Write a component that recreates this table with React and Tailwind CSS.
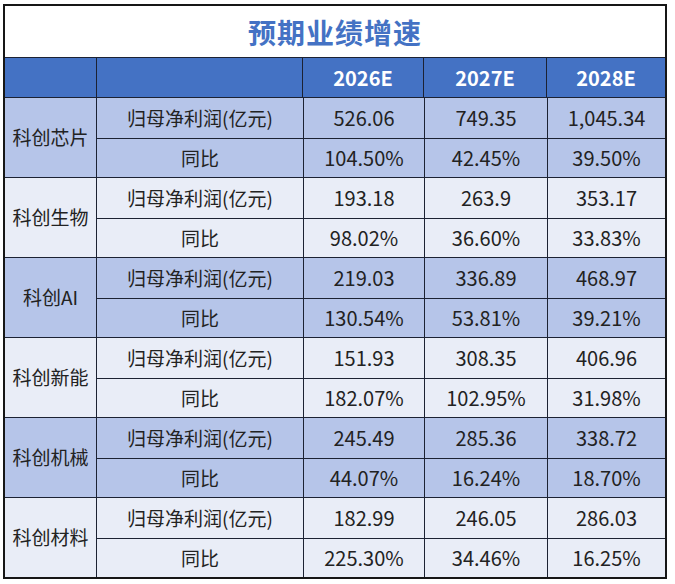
import React from 'react'

const YEARS = ['2026E', '2027E', '2028E']

const GROUPS = [
  { name: '科创芯片', profit: ['526.06', '749.35', '1,045.34'], yoy: ['104.50%', '42.45%', '39.50%'] },
  { name: '科创生物', profit: ['193.18', '263.9', '353.17'], yoy: ['98.02%', '36.60%', '33.83%'] },
  { name: '科创AI', profit: ['219.03', '336.89', '468.97'], yoy: ['130.54%', '53.81%', '39.21%'] },
  { name: '科创新能', profit: ['151.93', '308.35', '406.96'], yoy: ['182.07%', '102.95%', '31.98%'] },
  { name: '科创机械', profit: ['245.49', '285.36', '338.72'], yoy: ['44.07%', '16.24%', '18.70%'] },
  { name: '科创材料', profit: ['182.99', '246.05', '286.03'], yoy: ['225.30%', '34.46%', '16.25%'] },
]

const FONT = { fontFamily: '"Noto Sans CJK SC", "Noto Sans", sans-serif' }

function DataRow({ label, values, top }) {
  return (
    <div className={`grid grid-cols-[206px_121px_123px_1fr] h-[40px] ${top ? 'border-t border-[#1c2233]' : ''}`}>
      <div className="flex items-center justify-center">{label}</div>
      {values.map((v, i) => (
        <div key={i} className="flex items-center justify-center border-l border-[#1c2233] text-[20px]">
          {v}
        </div>
      ))}
    </div>
  )
}

export default function App() {
  return (
    <div className="bg-white w-[675px] h-[584px] pt-[4px] pl-[3px]" style={FONT}>
      <div className="w-[664px] border-2 border-[#161616] text-[19px] text-[#222]">
        {/* Title */}
        <div className="h-[51px] flex items-center justify-center text-[28px] font-bold text-[#4472c4] tracking-[1px]">
          预期业绩增速
        </div>

        {/* Header */}
        <div className="grid grid-cols-[91px_206px_121px_123px_1fr] h-[40px] bg-[#4472c4] border-t border-[#1c2233] text-white font-bold text-[20px]">
          <div />
          <div className="border-l border-[#1c2233]" />
          {YEARS.map((y) => (
            <div key={y} className="flex items-center justify-center border-l border-[#1c2233]">{y}</div>
          ))}
        </div>

        {/* Groups */}
        {GROUPS.map((g, i) => (
          <div
            key={g.name}
            className={`flex h-[80px] border-t border-[#1c2233] ${i % 2 === 0 ? 'bg-[#b6c5e9]' : 'bg-[#e9edf7]'}`}
          >
            <div className="w-[91px] flex items-center justify-center shrink-0">{g.name}</div>
            <div className="flex-1 flex flex-col border-l border-[#1c2233]">
              <DataRow label="归母净利润(亿元)" values={g.profit} />
              <DataRow label="同比" values={g.yoy} top />
            </div>
          </div>
        ))}
      </div>
    </div>
  )
}
